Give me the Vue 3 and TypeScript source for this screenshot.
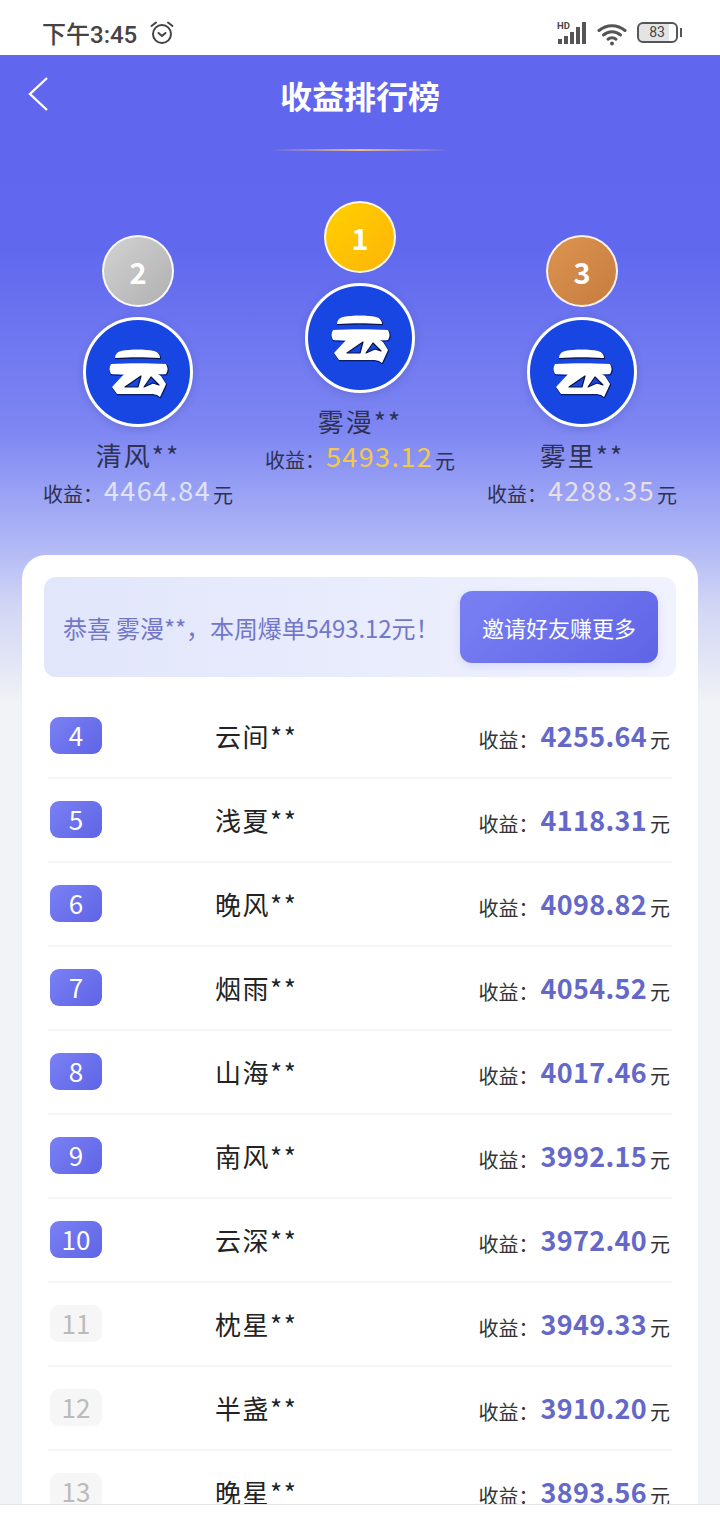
<script setup lang="ts">
interface TopUser {
  rank: number
  name: string
  amount: string
  medal: string
  lift: boolean
}

interface Row {
  rank: number
  name: string
  amount: string
}

const top: TopUser[] = [
  { rank: 2, name: '清风**', amount: '4464.84', medal: 'silver', lift: false },
  { rank: 1, name: '雾漫**', amount: '5493.12', medal: 'gold', lift: true },
  { rank: 3, name: '雾里**', amount: '4288.35', medal: 'bronze', lift: false },
]

const rows: Row[] = [
  { rank: 4, name: '云间**', amount: '4255.64' },
  { rank: 5, name: '浅夏**', amount: '4118.31' },
  { rank: 6, name: '晚风**', amount: '4098.82' },
  { rank: 7, name: '烟雨**', amount: '4054.52' },
  { rank: 8, name: '山海**', amount: '4017.46' },
  { rank: 9, name: '南风**', amount: '3992.15' },
  { rank: 10, name: '云深**', amount: '3972.40' },
  { rank: 11, name: '枕星**', amount: '3949.33' },
  { rank: 12, name: '半盏**', amount: '3910.20' },
  { rank: 13, name: '晚星**', amount: '3893.56' },
]

// logo shapes, origin at the avatar centre
const logoShapes = [
  'M-23-14c0-3 2-6 6-7 10-2 24-2 33 0 4 1 6 4 6 7-14-1-31-1-45 0Z',
  'M-13 1-26 15l5 7h36l4 1 3 2 6-13-5-8-5-3H-13Z',
  'M-27-8c15-1 40-1 55 0 2 3 2 7 0 10-14 1-41 1-55 0-2-3-2-7 0-10Z',
]
const logoHoles = 'M-13 15 3 4 0 15ZM6 15l7-10 8 8-6-2Z'
</script>

<template>
  <div class="page">
    <div class="status">
      <div class="status-left">
        <span class="clock">下午3:45</span>
        <svg class="alarm" width="26" height="26" viewBox="0 0 26 26" fill="none" stroke="#444" stroke-width="2">
          <circle cx="13" cy="14" r="9" />
          <path d="M9.500 13 13 16l3.500-3M2.500 6 7 2.500M23.500 6 19 2.500" stroke-linecap="round" stroke-linejoin="round" />
        </svg>
      </div>
      <div class="status-right">
        <svg width="30" height="24" viewBox="0 0 30 24">
          <text x="0" y="8" font-size="9.500" font-weight="700" font-family="Roboto, sans-serif" fill="#444">HD</text>
          <g fill="#555">
            <rect x="1" y="18" width="4" height="5" />
            <rect x="7" y="15" width="4" height="8" />
            <rect x="13" y="11" width="4" height="12" />
            <rect x="19" y="6" width="4" height="17" />
            <rect x="25" y="1" width="4" height="22" />
          </g>
        </svg>
        <svg class="wifi" width="30" height="24" viewBox="0 0 30 24" fill="none" stroke="#555" stroke-width="3" stroke-linecap="round">
          <path d="M2 8.500c7.500-6.500 18.500-6.500 26 0" />
          <path d="M6.500 13c5-4.300 12-4.300 17 0" />
          <path d="M11 17.200c2.300-1.800 5.700-1.800 8 0" />
          <circle cx="15" cy="21.500" r="2" fill="#555" stroke="none" />
        </svg>
        <div class="battery">
          <span class="battery-fill">83</span>
          <i class="battery-cap"></i>
        </div>
      </div>
    </div>

    <div class="hero">
      <div class="nav">
        <svg class="back" width="22" height="36" viewBox="0 0 22 36" fill="none" stroke="#fff" stroke-width="2.400">
          <path d="M20 2 3 18l17 16" stroke-linejoin="miter" />
        </svg>
        <h1 class="title">收益排行榜</h1>
      </div>
      <div class="title-line"></div>

      <div class="podium">
        <div v-for="u in top" :key="u.rank" class="winner" :class="{ lift: u.lift }">
          <div class="medal" :class="u.medal">{{ u.rank }}</div>
          <div class="avatar">
            <svg width="104" height="104" viewBox="-52 -52 104 104">
              <g fill="none" stroke="#0a1440" stroke-width="1.100" stroke-linejoin="round" transform="translate(0.500 0.700)">
                <path v-for="d in logoShapes" :key="d" :d="d" />
              </g>
              <g fill="#fff">
                <path v-for="d in logoShapes" :key="d" :d="d" />
              </g>
              <path :d="logoHoles" fill="#1746e2" stroke="#0a1440" stroke-width="1.200" stroke-linejoin="round" />
            </svg>
          </div>
          <div class="winner-name">{{ u.name }}</div>
          <div class="winner-income">
            <span class="label">收益：</span><span class="amount">{{ u.amount }}</span><span class="unit">元</span>
          </div>
        </div>
      </div>
    </div>

    <div class="card">
      <div class="banner">
        <span class="banner-text">恭喜 雾漫**，本周爆单5493.12元！</span>
        <button class="invite" type="button">邀请好友赚更多</button>
      </div>
      <div class="list">
        <div v-for="r in rows" :key="r.rank" class="row">
          <div class="rank" :class="{ muted: r.rank > 10 }">{{ r.rank }}</div>
          <div class="row-name">{{ r.name }}</div>
          <div class="row-income">
            <span class="row-label">收益：</span><span class="row-amount">{{ r.amount }}</span><span class="row-unit">元</span>
          </div>
        </div>
      </div>
    </div>

    <div class="bottom-bar"></div>
  </div>
</template>

<style scoped>
.page {
  position: relative;
  width: 720px;
  height: 1514px;
  overflow: hidden;
  background: #f2f3f7;
  font-family: "Noto Sans CJK SC", "Liberation Sans", sans-serif;
}

.status {
  height: 55px;
  background: #fff;
  display: flex;
  justify-content: space-between;
  align-items: center;
  padding: 10px 38px 0 42px;
  box-sizing: border-box;
}

.status-left,
.status-right {
  display: flex;
  align-items: center;
}

.status-left {
  gap: 12px;
}

.status-right {
  gap: 10px;
}

.wifi {
  margin-top: 2px;
}

.clock {
  font-family: Roboto, "Noto Sans CJK SC", sans-serif;
  font-size: 24px;
  font-weight: 500;
  color: #444;
}

.battery {
  display: flex;
  align-items: center;
}

.battery-fill {
  width: 37px;
  height: 17px;
  border: 2.500px solid #555;
  border-radius: 6px;
  font-family: Roboto, sans-serif;
  font-size: 14px;
  line-height: 17px;
  color: #444;
  text-align: center;
  background: linear-gradient(90deg, #e4e4e4 80%, #fff 80%);
}

.battery-cap {
  width: 2.500px;
  height: 9px;
  margin-left: 2px;
  background: #555;
}

.hero {
  height: 645px;
  background: linear-gradient(180deg, #6066ee 0%, #6068ee 30%, #7d86f2 58%, #b0b8f6 76%, #d0d5f5 85%, #e9ebf5 97%, #f1f2f6 100%);
  box-sizing: border-box;
}

.nav {
  position: relative;
  height: 84px;
  display: flex;
  align-items: center;
  justify-content: center;
}

.back {
  position: absolute;
  left: 27px;
  top: 21px;
}

.title {
  margin: 0;
  font-size: 32px;
  font-weight: 700;
  color: #fff;
  line-height: 1;
  position: relative;
  top: -2px;
}

.title-line {
  width: 180px;
  height: 2px;
  margin: 10px auto 0;
  background: linear-gradient(90deg, rgba(240, 200, 150, 0), #ecbd88 50%, rgba(240, 200, 150, 0));
}

.podium {
  display: grid;
  grid-template-columns: 222px 222px 222px;
  justify-content: center;
  padding-top: 84px;
}

.winner {
  display: flex;
  flex-direction: column;
  align-items: center;
}

.winner.lift {
  margin-top: -34px;
}

.medal {
  width: 68px;
  height: 68px;
  border-radius: 50%;
  border: 2px solid rgba(255, 255, 255, 0.9);
  display: flex;
  align-items: center;
  justify-content: center;
  font-size: 29px;
  font-weight: 700;
  color: #fff;
}

.medal.gold {
  background: linear-gradient(135deg, #ffd000, #fdb408);
}

.medal.silver {
  background: linear-gradient(135deg, #d2d2d2, #b0b0b0);
}

.medal.bronze {
  background: linear-gradient(135deg, #dd9450, #c67c3e);
}

.avatar {
  width: 104px;
  height: 104px;
  margin-top: 10px;
  border: 3px solid #fff;
  border-radius: 50%;
  background: #1746e2;
  display: flex;
  align-items: center;
  justify-content: center;
  box-shadow: 0 2px 8px rgba(40, 40, 120, 0.2);
}

.winner-name {
  margin-top: 10px;
  font-size: 26px;
  line-height: 36px;
  letter-spacing: 2px;
  color: #2e3150;
}

.winner-income {
  margin-top: 0;
  display: flex;
  align-items: baseline;
  line-height: 36px;
  color: #2e3150;
}

.label,
.unit {
  font-size: 20px;
}

.label {
  margin-right: 1px;
}

.unit {
  margin-left: 2px;
  position: relative;
  top: 1px;
}

.amount {
  font-size: 27px;
  letter-spacing: 1.400px;
  color: #dfe3fb;
  position: relative;
  top: -1px;
}

.lift .amount {
  color: #f2c94c;
}

.winner:last-child .amount {
  color: #e6dfe6;
}

.card {
  position: absolute;
  left: 22px;
  top: 555px;
  width: 676px;
  height: 1000px;
  box-sizing: border-box;
  padding: 22px 22px 0;
  border-radius: 24px;
  background: #fff;
}

.banner {
  height: 100px;
  box-sizing: border-box;
  border-radius: 12px;
  padding: 0 18px 0 19px;
  background: linear-gradient(90deg, #e2e6fb, #f0f2fe);
  display: flex;
  align-items: center;
  justify-content: space-between;
}

.banner-text {
  font-size: 24px;
  letter-spacing: -0.100px;
  color: #7277c9;
  white-space: nowrap;
}

.invite {
  width: 198px;
  height: 72px;
  border: none;
  border-radius: 12px;
  background: linear-gradient(135deg, #7a80f3, #5f64e6);
  color: #fff;
  font-family: inherit;
  font-size: 22px;
  box-shadow: 0 3px 8px rgba(96, 102, 238, 0.15);
}

.list {
  margin-top: 18px;
  padding: 0 4px;
}

.row {
  height: 84px;
  box-sizing: border-box;
  border-bottom: 2px solid #f6f6f8;
  display: flex;
  align-items: center;
  position: relative;
}

.rank {
  width: 52px;
  height: 37px;
  margin-left: 2px;
  margin-top: -1px;
  border-radius: 9px;
  background: linear-gradient(135deg, #7a80f3, #5f64e6);
  color: #fff;
  font-size: 26px;
  line-height: 36px;
  text-align: center;
}

.rank.muted {
  background: #f6f6f6;
  color: #bbb;
}

.row-name {
  margin-left: 113px;
  margin-top: -2px;
  font-size: 26px;
  letter-spacing: 1.500px;
  color: #222;
}

.row-income {
  margin-left: auto;
  margin-right: 2px;
  display: flex;
  align-items: baseline;
  color: #333;
}

.row-label,
.row-unit {
  font-size: 20px;
}

.row-label {
  margin-right: 2px;
}

.row-unit {
  margin-left: 3px;
}

.row-amount {
  font-size: 27px;
  font-weight: 700;
  letter-spacing: 0.300px;
  color: #6468c8;
  position: relative;
  top: -1px;
}

.bottom-bar {
  position: absolute;
  left: 0;
  right: 0;
  bottom: 0;
  height: 9px;
  background: #fff;
  border-top: 1px solid #e4e4e4;
}
</style>
